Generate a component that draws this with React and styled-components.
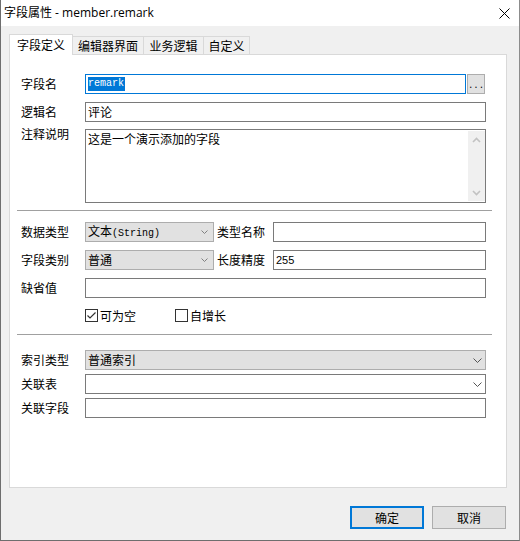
import React from "react";
import styled, { createGlobalStyle } from "styled-components";

const Global = createGlobalStyle`
  html, body { margin: 0; padding: 0; background: #f0f0f0; }
  body { width: 520px; height: 541px; overflow: hidden; }
  *, *::before, *::after { box-sizing: border-box; }
`;

const FONT = `"Noto Sans CJK SC", "Noto Sans", sans-serif`;

const Window = styled.div`
  width: 520px;
  height: 541px;
  display: flex;
  flex-direction: column;
  background: #f0f0f0;
  border-left: 1px solid #6e6e6e;
  border-right: 1px solid #8c8c8c;
  border-bottom: 1px solid #6e6e6e;
  font-family: ${FONT};
  font-size: 12px;
  color: #000;
`;

const TitleBar = styled.div`
  height: 26px;
  flex: none;
  background: #fff;
  display: flex;
  align-items: center;
  padding-left: 3px;
`;

const TitleText = styled.div`
  flex: 1;
  font-family: "Open Sans", "Noto Sans CJK SC", sans-serif;
  font-size: 12px;
  line-height: 16px;
  padding-bottom: 1px;
`;

const CloseBtn = styled.div`
  width: 30px;
  height: 26px;
  display: flex;
  align-items: center;
  justify-content: center;
`;

const Body = styled.div`
  flex: 1;
  display: flex;
  flex-direction: column;
  padding: 8px 12px 11px 8px;
`;

const TabRow = styled.div`
  height: 20px;
  flex: none;
  display: flex;
  align-items: flex-end;
`;

const Tab = styled.div`
  width: ${(p) => p.$w}px;
  height: ${(p) => (p.$active ? 21 : 18)}px;
  margin-left: ${(p) => (p.$first ? 0 : -1)}px;
  margin-bottom: ${(p) => (p.$active ? -1 : 0)}px;
  position: relative;
  z-index: ${(p) => (p.$active ? 2 : 1)};
  background: ${(p) => (p.$active ? "#fff" : "#f0f0f0")};
  border: 1px solid #d9d9d9;
  border-bottom: none;
  display: flex;
  align-items: center;
  justify-content: center;
  line-height: 14px;
  white-space: nowrap;
`;

const Panel = styled.div`
  flex: 1;
  background: #fff;
  border: 1px solid #d9d9d9;
  padding: 19px 20px 0 11px;
  display: flex;
  flex-direction: column;
`;

const Row = styled.div`
  display: flex;
  align-items: ${(p) => (p.$top ? "flex-start" : "center")};
  margin-top: ${(p) => p.$mt || 0}px;
`;

const Label = styled.div`
  width: ${(p) => p.$w || 64}px;
  flex: none;
  line-height: 14px;
  margin-left: ${(p) => p.$ml || 0}px;
  margin-top: ${(p) => p.$off || 0}px;
  white-space: nowrap;
`;

const Field = styled.div`
  flex: 1;
  min-width: 0;
  height: 20px;
  border: 1px solid ${(p) => (p.$focus ? "#0078d7" : "#7a7a7a")};
  background: #fff;
  display: flex;
  align-items: center;
  padding-left: 2px;
  line-height: 14px;
`;

const Selected = styled.span`
  background: #0078d7;
  color: #fff;
  font-family: "Liberation Mono", monospace;
  font-size: 10px;
  line-height: 14px;
  padding-right: 1px;
`;

const Mono = styled.span`
  font-family: "Liberation Mono", monospace;
  font-size: 10px;
`;

const Num = styled.span`
  font-family: "Liberation Sans", sans-serif;
  font-size: 11px;
`;

const DotsBtn = styled.div`
  width: 18px;
  height: 20px;
  flex: none;
  margin: 0 1px 0 1px;
  background: #e1e1e1;
  border: 1px solid #adadad;
  display: flex;
  align-items: center;
  justify-content: center;
  font-family: "Liberation Mono", monospace;
  font-size: 9px;
  letter-spacing: 0;
  padding-top: 3px;
  padding-left: 0;
`;

const TextArea = styled.div`
  flex: 1;
  height: 74px;
  border: 1px solid #7a7a7a;
  background: #fff;
  display: flex;
`;

const TextContent = styled.div`
  flex: 1;
  padding: 2px 2px;
  line-height: 14px;
`;

const ScrollBar = styled.div`
  width: 17px;
  flex: none;
  background: #f0f0f0;
  margin: 1px 0;
  display: flex;
  flex-direction: column;
  align-items: center;
  justify-content: space-between;
  padding: 6px 0 5px 0;
`;

const Sep = styled.div`
  height: 1px;
  background: #a0a0a0;
  margin: ${(p) => p.$mt}px -6px 0 -4px;
`;

const Combo = styled.div`
  width: ${(p) => (p.$w ? `${p.$w}px` : "auto")};
  flex: ${(p) => (p.$w ? "none" : 1)};
  height: 20px;
  border: 1px solid ${(p) => (p.$edit ? "#7a7a7a" : "#adadad")};
  background: ${(p) => (p.$edit ? "#fff" : "#e1e1e1")};
  display: flex;
  align-items: center;
  padding: 0 ${(p) => (p.$w ? 5 : 3)}px 0 2px;
`;

const ComboText = styled.div`
  flex: 1;
  line-height: 14px;
  white-space: nowrap;
`;

const CheckRow = styled.div`
  display: flex;
  align-items: center;
  height: 13px;
  margin-top: ${(p) => p.$mt}px;
  padding-left: 64px;
`;

const CheckItem = styled.label`
  width: ${(p) => p.$w}px;
  flex: none;
  display: flex;
  align-items: center;
  gap: 2px;
  line-height: 14px;
`;

const Box = styled.span`
  width: 13px;
  height: 13px;
  border: 1px solid #333;
  background: #fff;
  display: flex;
  align-items: center;
  justify-content: center;
`;

const Footer = styled.div`
  flex: none;
  display: flex;
  justify-content: flex-end;
  gap: 8px;
  margin-top: 18px;
  padding-right: 1px;
`;

const Button = styled.div`
  width: 74px;
  height: 23px;
  background: #e1e1e1;
  border: ${(p) => (p.$primary ? "2px solid #0078d7" : "1px solid #adadad")};
  display: flex;
  align-items: center;
  justify-content: center;
  line-height: 14px;
`;

const Chevron = ({ big }) =>
  big ? (
    <svg width="9" height="5" viewBox="0 0 9 5">
      <polyline points="0.5,0.5 4.5,4.5 8.5,0.5" fill="none" stroke="#555" strokeWidth="1" />
    </svg>
  ) : (
    <svg width="7" height="4" viewBox="0 0 7 4">
      <polyline points="0.5,0.5 3.5,3.5 6.5,0.5" fill="none" stroke="#808080" strokeWidth="1" />
    </svg>
  );

const Arrow = ({ up }) => (
  <svg width="9" height="6" viewBox="0 0 9 6">
    <polyline
      points={up ? "1,5 4.5,1.5 8,5" : "1,1 4.5,4.5 8,1"}
      fill="none"
      stroke="#c2c2c2"
      strokeWidth="1.6"
    />
  </svg>
);

export default function App() {
  return (
    <>
      <Global />
      <Window>
        <TitleBar>
          <TitleText>字段属性 - member.remark</TitleText>
          <CloseBtn>
            <svg width="11" height="11" viewBox="0 0 11 11">
              <path d="M0.5 0.5 L10.5 10.5 M10.5 0.5 L0.5 10.5" stroke="#000" strokeWidth="1" fill="none" />
            </svg>
          </CloseBtn>
        </TitleBar>
        <Body>
          <TabRow>
            <Tab $active $first $w={64}>字段定义</Tab>
            <Tab $w={72}>编辑器界面</Tab>
            <Tab $w={61}>业务逻辑</Tab>
            <Tab $w={47}>自定义</Tab>
          </TabRow>
          <Panel>
            <Row>
              <Label>字段名</Label>
              <Field $focus>
                <Selected>remark</Selected>
              </Field>
              <DotsBtn>...</DotsBtn>
            </Row>
            <Row $mt={8}>
              <Label>逻辑名</Label>
              <Field>评论</Field>
            </Row>
            <Row $mt={7} $top>
              <Label $off={-2}>注释说明</Label>
              <TextArea>
                <TextContent>这是一个演示添加的字段</TextContent>
                <ScrollBar>
                  <Arrow up />
                  <Arrow />
                </ScrollBar>
              </TextArea>
            </Row>
            <Sep $mt={7} />
            <Row $mt={11}>
              <Label>数据类型</Label>
              <Combo $w={129}>
                <ComboText>
                  文本<Mono>(String)</Mono>
                </ComboText>
                <Chevron />
              </Combo>
              <Label $w={56} $ml={3}>类型名称</Label>
              <Field />
            </Row>
            <Row $mt={8}>
              <Label>字段类别</Label>
              <Combo $w={129}>
                <ComboText>普通</ComboText>
                <Chevron />
              </Combo>
              <Label $w={56} $ml={3}>长度精度</Label>
              <Field>
                <Num>255</Num>
              </Field>
            </Row>
            <Row $mt={8}>
              <Label>缺省值</Label>
              <Field />
            </Row>
            <CheckRow $mt={11}>
              <CheckItem $w={90}>
                <Box>
                  <svg width="11" height="11" viewBox="0 0 11 11">
                    <polyline points="1.5,5.5 4,8 9.5,2.5" fill="none" stroke="#333" strokeWidth="1.2" />
                  </svg>
                </Box>
                可为空
              </CheckItem>
              <CheckItem $w={60}>
                <Box />
                自增长
              </CheckItem>
            </CheckRow>
            <Sep $mt={12} />
            <Row $mt={15}>
              <Label>索引类型</Label>
              <Combo>
                <ComboText>普通索引</ComboText>
                <Chevron big />
              </Combo>
            </Row>
            <Row $mt={4}>
              <Label>关联表</Label>
              <Combo $edit>
                <ComboText />
                <Chevron big />
              </Combo>
            </Row>
            <Row $mt={4}>
              <Label>关联字段</Label>
              <Field />
            </Row>
          </Panel>
          <Footer>
            <Button $primary>确定</Button>
            <Button>取消</Button>
          </Footer>
        </Body>
      </Window>
    </>
  );
}
